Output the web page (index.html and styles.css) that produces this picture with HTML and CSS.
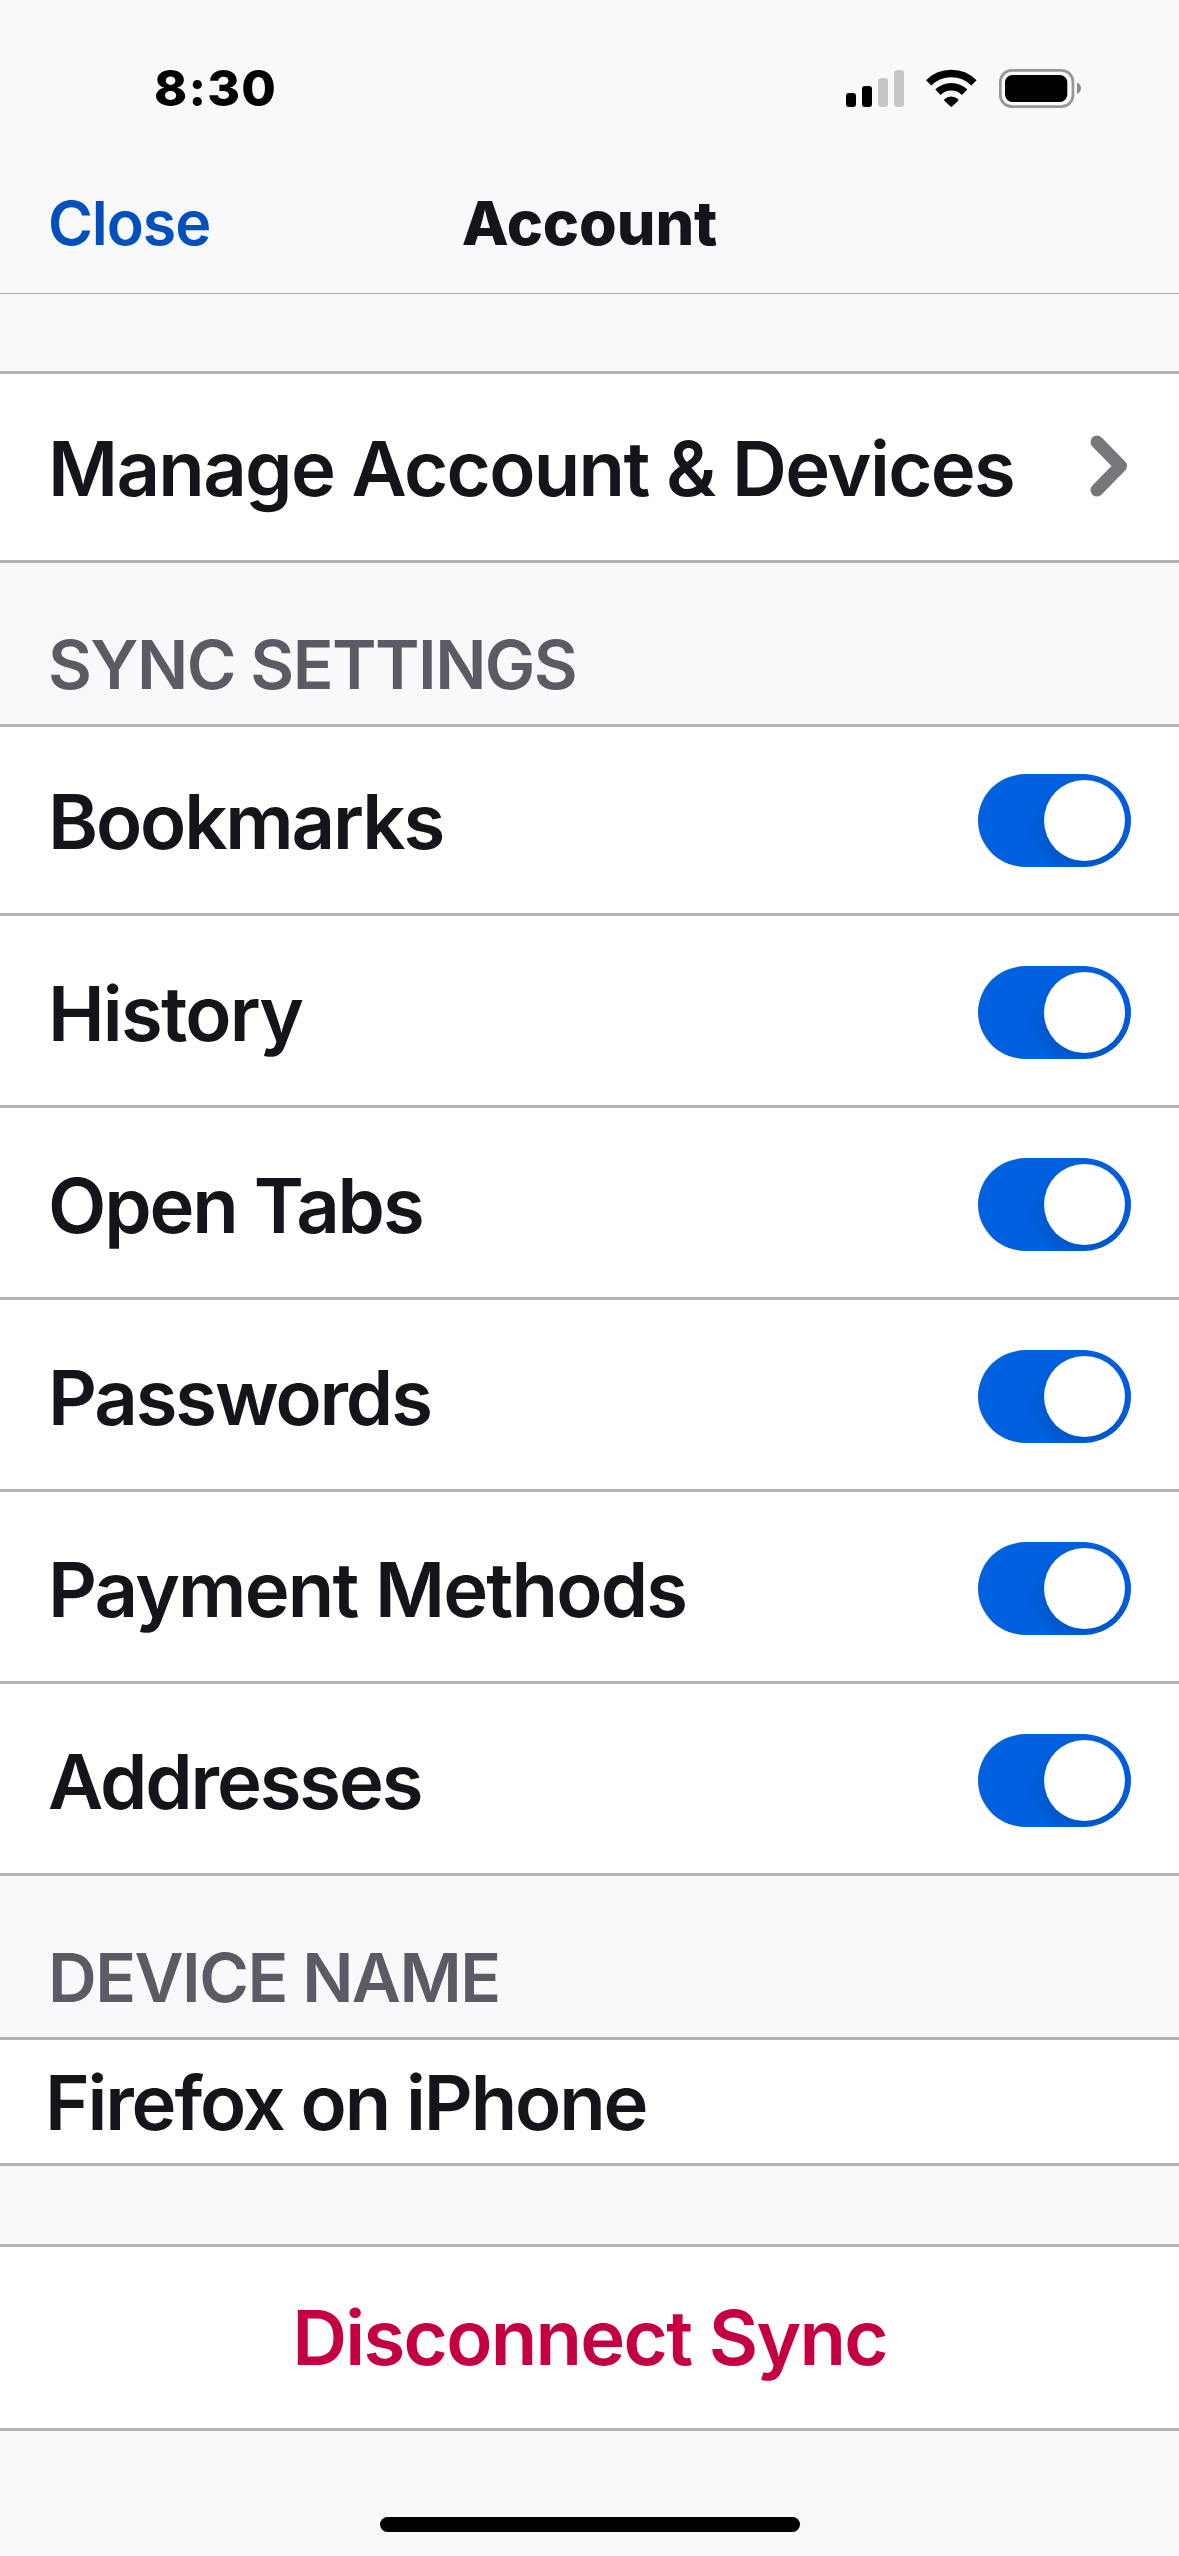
FILE: index.html
```
<!DOCTYPE html>
<html lang="en">
<head>
    <meta charset="UTF-8">
    <meta name="viewport" content="width=device-width, initial-scale=1.0">
    <title>Account</title>
    <link rel="stylesheet" href="styles.css">
    <script>
        document.addEventListener("DOMContentLoaded", () => {
            // flip a sync switch on click
            document.querySelectorAll(".toggle").forEach(toggle => {
                toggle.addEventListener("click", () => {
                    const on = toggle.classList.toggle("on");
                    toggle.setAttribute("aria-checked", on);
                });
            });
        });
    </script>
</head>
<body>
    <!-- status bar -->
    <div class="status-bar">
        <span class="time">8:30</span>
        <div class="status-icons">
            <svg width="58" height="39" viewBox="0 0 58 39">
                <rect x="0" y="24" width="10" height="14" rx="3"/>
                <rect x="16" y="17" width="10" height="21" rx="3"/>
                <rect class="dim" x="32" y="9" width="10" height="29" rx="3"/>
                <rect class="dim" x="48" y="1" width="10" height="37" rx="3"/>
            </svg>
            <svg width="51" height="39" viewBox="0 0 51 39">
                <path class="arc" d="M2.7 13.9 A31.9 31.9 0 0 1 47.9 13.9" stroke-width="7.4"/>
                <path class="arc" d="M12 23.2 A18.8 18.8 0 0 1 38.6 23.2" stroke-width="7.6"/>
                <path d="M18.6 30.1 A10 10 0 0 1 32 30.1 Q33 31 32 32 L26 37.6 Q25.3 38.2 24.6 37.6 L18.6 32 Q17.6 31 18.6 30.1 Z"/>
            </svg>
            <svg width="82" height="39" viewBox="0 0 82 39">
                <rect class="shell" x="1.35" y="1.35" width="72.6" height="36.3" rx="11.5"/>
                <rect x="6" y="6" width="62.3" height="27" rx="7.5"/>
                <path class="tip" d="M78 13.5 Q82 15.5 82 19.3 Q82 23 78 25 Z"/>
            </svg>
        </div>
    </div>

    <!-- navigation -->
    <header class="nav">
        <a class="close">Close</a>
        <h1 class="title">Account</h1>
    </header>

    <main>
        <div class="group first">
            <div class="row">
                <span class="label manage">Manage Account &amp; Devices</span>
                <svg class="chevron" width="38" height="62" viewBox="0 0 38 62">
                    <path d="M7 7 L30.5 31 L7 55"/>
                </svg>
            </div>
        </div>

        <h2 class="caption">SYNC SETTINGS</h2>
        <div class="group">
            <div class="row">
                <span class="label">Bookmarks</span>
                <button class="toggle on" role="switch" aria-checked="true" aria-label="Bookmarks"></button>
            </div>
            <div class="row">
                <span class="label history">History</span>
                <button class="toggle on" role="switch" aria-checked="true" aria-label="History"></button>
            </div>
            <div class="row">
                <span class="label">Open Tabs</span>
                <button class="toggle on" role="switch" aria-checked="true" aria-label="Open Tabs"></button>
            </div>
            <div class="row">
                <span class="label">Passwords</span>
                <button class="toggle on" role="switch" aria-checked="true" aria-label="Passwords"></button>
            </div>
            <div class="row">
                <span class="label payment">Payment Methods</span>
                <button class="toggle on" role="switch" aria-checked="true" aria-label="Payment Methods"></button>
            </div>
            <div class="row">
                <span class="label">Addresses</span>
                <button class="toggle on" role="switch" aria-checked="true" aria-label="Addresses"></button>
            </div>
        </div>

        <h2 class="caption">DEVICE NAME</h2>
        <div class="group">
            <div class="row name-row">
                <span class="label">Firefox on iPhone</span>
            </div>
        </div>

        <div class="group last">
            <div class="row disconnect-row">
                <span class="label disconnect">Disconnect Sync</span>
            </div>
        </div>
    </main>

    <div class="home-indicator"></div>
</body>
</html>
```
FILE: styles.css
```
* {
    box-sizing: border-box;
}

body {
    margin: 0;
    min-height: 2556px;
    background-color: #f9f9fb;
    color: #15141a;
    font-family: Inter, "Liberation Sans", sans-serif;
    overflow: hidden;
}

/* status bar */
.status-bar {
    display: flex;
    justify-content: space-between;
    align-items: center;
    height: 153px;
    padding: 23px 98px 0 154px;
    color: #000;
}

.time {
    font-size: 50px;
    font-weight: 800;
    letter-spacing: 1.2px;
}

.status-icons {
    display: flex;
    gap: 22px;
}

.status-icons .dim {
    fill: #c7c7c9;
}

.status-icons .arc {
    fill: none;
    stroke: #000;
}

.status-icons .shell {
    fill: none;
    stroke: #979799;
    stroke-width: 2.7;
}

.status-icons .tip {
    fill: #8b8b8d;
}

/* navigation */
.nav {
    display: grid;
    grid-template-columns: 1fr auto 1fr;
    align-items: center;
    height: 141px;
    padding: 0 48px;
    border-bottom: 1px solid #acacaf;
    font-size: 61px;
}

.close {
    color: #0250bb;
    font-weight: 570;
    letter-spacing: -1.1px;
}

.title {
    margin: 0;
    font-size: 61px;
    font-weight: 800;
    letter-spacing: -0.1px;
}

/* list groups */
.group {
    background-color: #fff;
    border-top: 3px solid #b2b2b7;
}

.group.first {
    margin-top: 77px;
}

.group.last {
    margin-top: 78px;
}

.row {
    display: flex;
    justify-content: space-between;
    align-items: center;
    height: 192px;
    padding: 4px 48px 0;
    border-bottom: 3px solid #b2b2b7;
}

.row:first-child {
    margin-top: -3px;
}

.label {
    font-size: 76px;
    font-weight: 600;
    letter-spacing: -2.15px;
    white-space: nowrap;
}

.label.manage {
    letter-spacing: -1.7px;
}

.label.history,
.label.payment {
    letter-spacing: -1.8px;
}

.label.disconnect {
    color: #c50042;
    letter-spacing: -1.7px;
}

.row.name-row {
    height: 129px;
    padding-left: 45px;
}

.row.disconnect-row {
    height: 187px;
    padding-top: 1px;
    justify-content: center;
}

.chevron {
    margin: 0 3px 3px 0;
    fill: none;
    stroke: #77777b;
    stroke-width: 13;
    stroke-linecap: round;
    stroke-linejoin: round;
}

.caption {
    display: flex;
    align-items: flex-end;
    height: 161px;
    margin: 0;
    padding: 0 48px 19px;
    color: #5b5b66;
    font-size: 67.5px;
    font-weight: 570;
    line-height: 81px;
    letter-spacing: -1.55px;
}

/* switch */
.toggle {
    display: flex;
    align-items: center;
    width: 153px;
    height: 93px;
    padding: 0 6px;
    border: none;
    border-radius: 48px / 46.5px;
    background-color: #c7c7cc;
    overflow: hidden;
    cursor: pointer;
}

.toggle::after {
    content: "";
    width: 81px;
    height: 81px;
    border-radius: 50%;
    background-color: #fff;
    box-shadow: 0 9px 24px rgba(0, 0, 0, 0.15);
}

.toggle.on {
    justify-content: flex-end;
    background-color: #0061e0;
}

.home-indicator {
    width: 420px;
    height: 15px;
    margin: 86px auto 0;
    border-radius: 8px;
    background-color: #000;
}
```
